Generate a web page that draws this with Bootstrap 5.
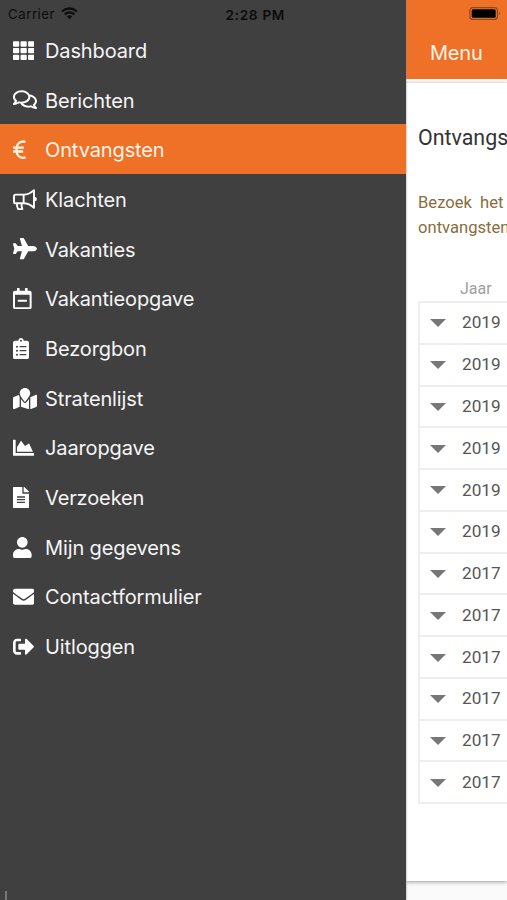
<!DOCTYPE html>
<html lang="nl">
<head>
<meta charset="utf-8">
<meta name="viewport" content="width=device-width, initial-scale=1">
<title>Ontvangsten</title>
<link href="https://cdn.jsdelivr.net/npm/bootstrap@5.3.0/dist/css/bootstrap.min.css" rel="stylesheet">
<style>
body{width:507px;height:900px;overflow:hidden;background:#fafafa;font-family:Inter,"Liberation Sans",sans-serif}
.side{width:405.5px;height:900px;background:#404040;color:#f5f5f5;box-shadow:0 0 2px #888;z-index:2}
.statusbar{height:25px;color:#0c0c0c;line-height:28px}
.carrier{width:217.5px;padding-left:8px;font-size:13.3px;letter-spacing:.5px}
.wifi{margin:7px 0 0 6px}
.clock{font-weight:600;font-size:13.6px;letter-spacing:.7px}
.side .nav-link{height:49.7px;padding:0 0 0 13px;color:#f5f5f5;font-size:20px;letter-spacing:-.12px;line-height:49px;white-space:nowrap}
.side .nav-link span+span{padding-top:3px}
.side .nav-link.active{background:#ee7127;color:#fff3e8}
.glyph{width:32px;flex:none}
.glyph svg{height:21.3px;display:block;fill:#fff;margin-top:1px}
.cursor-line{width:2px;height:9px;margin-left:5px;background:#777}
.main-pane{width:101.5px;overflow:hidden;height:900px;font-family:Roboto,sans-serif}
.topbar{height:79px;background:#ee7127;color:#fff3e8;font-family:Inter,sans-serif;font-size:20px;letter-spacing:-.2px}
.battery{margin:7px 0 0 63px;height:13px}
.menu-label{padding-left:24.5px;line-height:30px;margin-top:18px}
.sheet{height:798px;margin-top:4px;background:#fff;padding-left:12.5px;box-shadow:0 1px 4px #999}
.page-title{font-size:21.4px;line-height:26px;padding-top:42px;color:#333;margin:0;font-weight:400}
.notice{color:#8a6d3b;font-size:16.6px;line-height:25px;margin-top:39px;white-space:nowrap}
.first-line{word-spacing:4px}
.col-head{color:#a0a0a0;font-size:16px;line-height:20px;margin:39px 0 2px 42px}
.years{border:2px solid #eee;border-right:0}
.year-row{height:41.78px;border-bottom:2px solid #eee;padding:1px 0 0 10px;font-size:17.2px;color:#555}
.year-row:last-child{border-bottom:0;height:40px}
.tri{width:0;height:0;border:8.5px solid transparent;border-top:8.5px solid #777;border-bottom:0;margin-right:16px}
</style>
<script src="https://cdn.jsdelivr.net/npm/bootstrap@5.3.0/dist/js/bootstrap.bundle.min.js"></script>
</head>
<body>
<div class="d-flex">
<aside class="side flex-shrink-0 d-flex flex-column position-relative">
 <div class="statusbar d-flex flex-shrink-0">
  <div class="carrier d-flex align-items-start"><span>Carrier</span>
   <svg class="wifi" width="17" height="13" viewBox="0 0 17 13"><g fill="none" stroke="#0c0c0c" stroke-width="2.2"><path d="M1 4.500Q8.500-1.800 16 4.500"/><path d="M3.700 7.400Q8.500 3.400 13.300 7.400"/></g><path d="M5.800 9.300Q8.500 7.400 11.200 9.300L8.500 12.200Z" fill="#0c0c0c"/></svg></div>
  <div class="ms-2"><span class="clock">2:28 PM</span></div>
 </div>
 <nav class="nav flex-column flex-nowrap">
  <a class="nav-link d-flex align-items-center"><span class="glyph"><svg viewBox="0 0 512 512"><path d="M20 32h109q20 0 20 20v88q0 20-20 20H20q-20 0-20-20V52q0-20 20-20zm181 0h110q20 0 20 20v88q0 20-20 20H201q-20 0-20-20V52q0-20 20-20zm182 0h109q20 0 20 20v88q0 20-20 20H383q-20 0-20-20V52q0-20 20-20zM20 192h109q20 0 20 20v88q0 20-20 20H20q-20 0-20-20v-88q0-20 20-20zm181 0h110q20 0 20 20v88q0 20-20 20H201q-20 0-20-20v-88q0-20 20-20zm182 0h109q20 0 20 20v88q0 20-20 20H383q-20 0-20-20v-88q0-20 20-20zM20 352h109q20 0 20 20v88q0 20-20 20H20q-20 0-20-20v-88q0-20 20-20zm181 0h110q20 0 20 20v88q0 20-20 20H201q-20 0-20-20v-88q0-20 20-20zm182 0h109q20 0 20 20v88q0 20-20 20H383q-20 0-20-20v-88q0-20 20-20z"/></svg></span><span>Dashboard</span></a>
  <a class="nav-link d-flex align-items-center"><span class="glyph"><svg viewBox="0 0 576 512"><path d="M532 386.200c27.500-27.100 44-61.100 44-98.200 0-80-76.500-146.100-176.200-157.900C368.300 72.500 294.300 32 208 32 93.100 32 0 103.600 0 192c0 37 16.500 71 44 98.200-15.300 30.700-37.300 54.500-37.700 54.900-6.300 6.700-8.100 16.500-4.400 25 3.600 8.500 12 14 21.200 14 53.500 0 96.700-20.200 125.200-38.800 9.200 2.100 18.700 3.700 28.400 4.900C208.100 407.600 281.800 448 368 448c20.800 0 40.800-2.400 59.800-6.800C456.300 459.700 499.400 480 553 480c9.200 0 17.500-5.500 21.200-14 3.600-8.500 1.900-18.300-4.400-25-.4-.3-22.500-24.100-37.800-54.800zm-392.800-92.300L122.100 305c-14.100 9.100-28.500 16.300-43.100 21.400 2.700-4.700 5.400-9.700 8-14.800l15.500-31.100L77.700 256C64.200 242.600 48 220.700 48 192c0-60.700 73.300-112 160-112s160 51.300 160 112-73.300 112-160 112c-16.500 0-33-1.900-49-5.600l-19.800-4.500zM498.300 352l-24.700 24.400 15.500 31.100c2.600 5.100 5.300 10.100 8 14.800-14.600-5.100-29-12.300-43.100-21.400l-17.100-11.100-19.900 4.600c-16 3.700-32.500 5.600-49 5.600-54 0-102.200-20.100-131.300-49.700C338 339.500 416 272.900 416 192c0-3.400-.4-6.700-.7-10C479.700 196.500 528 238.800 528 288c0 28.700-16.200 50.600-29.700 64z"/></svg></span><span>Berichten</span></a>
  <a class="nav-link active d-flex align-items-center"><span class="glyph"><svg viewBox="0 0 320 512"><path d="M300 72Q275 60 240 60C145 60 82 135 82 256S145 452 240 452Q277 452 302 439M0 208H260M0 300H245" fill="none" stroke="#fff3e8" stroke-width="56"/></svg></span><span>Ontvangsten</span></a>
  <a class="nav-link d-flex align-items-center"><span class="glyph"><svg viewBox="0 0 576 512"><path d="M64 136H256C350 136 440 90 504 28V452C440 390 350 344 256 344H64Q24 344 24 304V176Q24 136 64 136ZM256 136V344M96 344Q90 430 126 488H218C240 470 200 450 208 400V344M510 200Q552 210 552 240T510 280" fill="none" stroke="#fff" stroke-width="46" stroke-linejoin="round"/></svg></span><span>Klachten</span></a>
  <a class="nav-link d-flex align-items-center"><span class="glyph"><svg viewBox="0 0 576 512"><path d="M480 192H365.710L260.610 8.060A16.014 16.014 0 0 0 246.710 0h-65.500c-10.630 0-18.300 10.170-15.380 20.390L214.860 192H112l-43.200-57.600c-3.020-4.030-7.770-6.400-12.800-6.400H16.010C5.600 128-2.040 137.780.49 147.880L32 256 .49 364.120C-2.040 374.220 5.600 384 16.010 384H56c5.040 0 9.780-2.370 12.800-6.400L112 320h102.860l-49.030 171.600c-2.920 10.220 4.750 20.400 15.380 20.400h65.500c5.740 0 11.040-3.080 13.890-8.060L365.710 320H480c35.350 0 96-28.650 96-64s-60.650-64-96-64z"/></svg></span><span>Vakanties</span></a>
  <a class="nav-link d-flex align-items-center"><span class="glyph"><svg viewBox="0 0 448 512"><path d="M124 328c-6.600 0-12-5.400-12-12v-24c0-6.600 5.400-12 12-12h200c6.600 0 12 5.400 12 12v24c0 6.600-5.400 12-12 12H124zm324-216v352c0 26.500-21.500 48-48 48H48c-26.500 0-48-21.500-48-48V112c0-26.500 21.500-48 48-48h48V12c0-6.600 5.400-12 12-12h40c6.600 0 12 5.400 12 12v52h128V12c0-6.600 5.400-12 12-12h40c6.600 0 12 5.400 12 12v52h48c26.500 0 48 21.500 48 48zm-48 346V160H48v298c0 3.300 2.700 6 6 6h340c3.300 0 6-2.700 6-6z"/></svg></span><span>Vakantieopgave</span></a>
  <a class="nav-link d-flex align-items-center"><span class="glyph"><svg viewBox="0 0 384 512"><path fill-rule="evenodd" d="M336 64h-80C256 28.700 227.300 0 192 0s-64 28.700-64 64H48C21.500 64 0 85.500 0 112v352c0 26.500 21.500 48 48 48h288c26.500 0 48-21.500 48-48V112c0-26.500-21.500-48-48-48zM96 424a24 24 0 1 1 0-48 24 24 0 0 1 0 48zm0-96a24 24 0 1 1 0-48 24 24 0 0 1 0 48zm0-96a24 24 0 1 1 0-48 24 24 0 0 1 0 48zm96-192a24 24 0 1 1 0 48 24 24 0 0 1 0-48zM160 384h160v32H160zM160 288h160v32H160zM160 192h160v32H160z"/></svg></span><span>Bezorgbon</span></a>
  <a class="nav-link d-flex align-items-center"><span class="glyph"><svg viewBox="0 0 576 512"><path d="M288 0c-69.590 0-126 56.410-126 126 0 56.260 82.350 158.800 113.900 196.020 6.390 7.540 17.820 7.540 24.200 0C331.650 284.800 414 182.260 414 126 414 56.410 357.590 0 288 0zM20.120 215.950A32.006 32.006 0 0 0 0 245.660v250.320c0 11.320 11.430 19.060 21.940 14.860L160 448V214.920c-8.840-15.980-16.070-31.540-21.250-46.420L20.120 215.950zM288 359.670c-14.070 0-27.380-6.180-36.510-16.960-19.660-23.200-40.570-49.620-59.490-76.720v182l192 64V266c-18.920 27.090-39.820 53.520-59.490 76.720-9.130 10.770-22.440 16.950-36.510 16.950zm266.060-198.510L416 224v288l139.880-55.950A31.996 31.996 0 0 0 576 426.340V176.020c0-11.320-11.430-19.060-21.940-14.860z"/></svg></span><span>Stratenlijst</span></a>
  <a class="nav-link d-flex align-items-center"><span class="glyph"><svg viewBox="0 0 512 512"><path d="M500 384c6.600 0 12 5.400 12 12v40c0 6.600-5.400 12-12 12H12c-6.600 0-12-5.400-12-12V76c0-6.600 5.400-12 12-12h40c6.600 0 12 5.400 12 12v308h436zM372.700 159.500L288 216l-85.300-113.700c-5.100-6.800-15.500-6.300-19.900 1L96 248v104h384l-89.900-187.800c-3.200-6.500-11.400-8.700-17.400-4.700z"/></svg></span><span>Jaaropgave</span></a>
  <a class="nav-link d-flex align-items-center"><span class="glyph"><svg viewBox="0 0 384 512"><path fill-rule="evenodd" d="M224 136V0H24C10.700 0 0 10.700 0 24v464c0 13.300 10.700 24 24 24h336c13.300 0 24-10.700 24-24V160H248c-13.200 0-24-10.800-24-24zM96 352h192v32H96zM96 288h192v32H96zM96 224h192v32H96zM384 121.900v6.100H256V0h6.100c6.400 0 12.500 2.500 17 7l97.900 98c4.500 4.500 7 10.600 7 16.900z"/></svg></span><span>Verzoeken</span></a>
  <a class="nav-link d-flex align-items-center"><span class="glyph"><svg viewBox="0 0 448 512"><path d="M224 256c70.700 0 128-57.300 128-128S294.700 0 224 0 96 57.300 96 128s57.300 128 128 128zm89.600 32h-16.700c-22.200 10.200-46.900 16-72.900 16s-50.600-5.800-72.900-16h-16.700C60.200 288 0 348.200 0 422.400V464c0 26.500 21.500 48 48 48h352c26.500 0 48-21.500 48-48v-41.600c0-74.200-60.200-134.400-134.400-134.400z"/></svg></span><span>Mijn gegevens</span></a>
  <a class="nav-link d-flex align-items-center"><span class="glyph"><svg viewBox="0 0 512 512"><path d="M502.300 190.800c3.900-3.100 9.700-.2 9.700 4.700V400c0 26.500-21.500 48-48 48H48c-26.500 0-48-21.500-48-48V195.600c0-5 5.700-7.800 9.700-4.700 22.400 17.400 52.100 39.500 154.100 113.600 21.100 15.400 56.700 47.800 92.200 47.600 35.700.3 72-32.800 92.300-47.600 102-74.100 131.600-96.300 154-113.700zM256 320c23.200.4 56.600-29.200 73.400-41.400 132.700-96.300 142.800-104.700 173.400-128.700 5.800-4.500 9.200-11.500 9.200-18.900v-19c0-26.500-21.500-48-48-48H48c-26.500 0-48 21.500-48 48v19c0 7.400 3.400 14.300 9.200 18.900 30.600 23.900 40.700 32.400 173.400 128.700 16.800 12.200 50.200 41.800 73.400 41.400z"/></svg></span><span>Contactformulier</span></a>
  <a class="nav-link d-flex align-items-center"><span class="glyph"><svg viewBox="0 0 512 512"><path d="M497 273L329 441c-15 15-41 4.500-41-17v-96H152c-13.300 0-24-10.700-24-24v-96c0-13.300 10.700-24 24-24h136V88c0-21.400 25.900-32 41-17l168 168c9.300 9.400 9.300 24.600 0 34zM192 436v-40c0-6.600-5.400-12-12-12H96c-17.700 0-32-14.300-32-32V160c0-17.700 14.300-32 32-32h84c6.600 0 12-5.400 12-12V76c0-6.600-5.400-12-12-12H96c-53 0-96 43-96 96v192c0 53 43 96 96 96h84c6.600 0 12-5.400 12-12z"/></svg></span><span>Uitloggen</span></a>
 </nav>
 <div class="cursor-line mt-auto"></div>
</aside>
<main class="main-pane flex-shrink-0">
 <header class="topbar d-flex flex-column">
  <svg class="battery" width="32" viewBox="0 0 32 13"><rect x=".9" y=".6" width="27.500" height="11.800" rx="3" fill="none" stroke="#8c4a20" stroke-width="1.200"/><rect x="2.700" y="2.200" width="24" height="8.600" rx="1.500" fill="#000"/><path d="M29.800 4.500q2 2 0 4z" fill="#8c4a20"/></svg>
  <div class="menu-label"><span>Menu</span></div>
 </header>
 <section class="sheet">
  <h1 class="page-title">Ontvangsten</h1>
  <div class="notice"><div class="first-line">Bezoek het</div><div>ontvangsten</div></div>
  <div class="col-head">Jaar</div>
  <div class="years">
   <div class="year-row d-flex align-items-center"><i class="tri"></i>2019</div>
   <div class="year-row d-flex align-items-center"><i class="tri"></i>2019</div>
   <div class="year-row d-flex align-items-center"><i class="tri"></i>2019</div>
   <div class="year-row d-flex align-items-center"><i class="tri"></i>2019</div>
   <div class="year-row d-flex align-items-center"><i class="tri"></i>2019</div>
   <div class="year-row d-flex align-items-center"><i class="tri"></i>2019</div>
   <div class="year-row d-flex align-items-center"><i class="tri"></i>2017</div>
   <div class="year-row d-flex align-items-center"><i class="tri"></i>2017</div>
   <div class="year-row d-flex align-items-center"><i class="tri"></i>2017</div>
   <div class="year-row d-flex align-items-center"><i class="tri"></i>2017</div>
   <div class="year-row d-flex align-items-center"><i class="tri"></i>2017</div>
   <div class="year-row d-flex align-items-center"><i class="tri"></i>2017</div>
  </div>
 </section>
</main>
</div>
</body>
</html>
